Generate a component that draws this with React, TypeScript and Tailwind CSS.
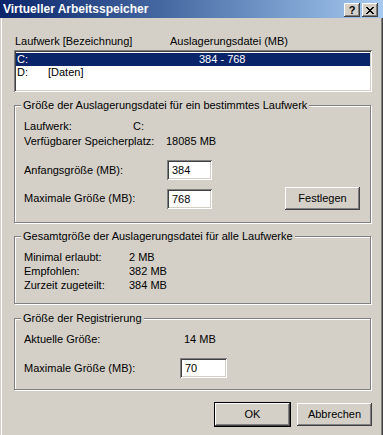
import type { ReactNode } from 'react'

const raised =
  'bg-[#d4d0c8] shadow-[inset_-1px_-1px_#404040,inset_1px_1px_#fff,inset_-2px_-2px_#808080,inset_2px_2px_#d4d0c8]'
const sunken =
  'bg-white shadow-[inset_1px_1px_#808080,inset_-1px_-1px_#fff,inset_2px_2px_#404040,inset_-2px_-2px_#d4d0c8]'

function Group({ title, className, children }: { title: string; className: string; children: ReactNode }) {
  // etched frame: gray line with a white line just below/right of it
  return (
    <div className={`relative mr-[1px] border border-[#808080] shadow-[1px_1px_0_#fff,inset_1px_1px_0_#fff] ${className}`}>
      <span className="absolute left-[6px] top-[-7px] h-[13px] bg-[#d4d0c8] px-[2px] leading-[13px]">{title}</span>
      {children}
    </div>
  )
}

function Field({ value, width }: { value: string; width: string }) {
  return (
    <div className={`${sunken} ${width} h-[20px] pl-[5px] leading-[20px]`}>{value}</div>
  )
}

function Button({ label, isDefault = false }: { label: string; isDefault?: boolean }) {
  return (
    <button
      className={`${raised} flex h-[23px] w-[75px] items-center justify-center ${isDefault ? 'outline outline-1 outline-black' : ''}`}
    >
      {label}
    </button>
  )
}

export default function App() {
  return (
    <div
      className="flex h-[435px] w-[383px] flex-col overflow-hidden bg-[#d4d0c8] text-[11px] text-black"
      style={{ fontFamily: '"Liberation Sans", Arial, sans-serif' }}
    >
      {/* title bar */}
      <div className="flex h-[18px] items-start bg-gradient-to-r from-[#0a246a] to-[#a6caf0] pl-[3px] pr-[5px]">
        <span className="mt-[2px] flex-1 text-[12px] font-bold leading-[14px] text-white">Virtueller Arbeitsspeicher</span>
        <div className="mt-[3px] flex gap-[2px]">
          <div className={`${raised} flex h-[14px] w-[16px] items-center justify-center text-[11px] font-bold leading-none`}>?</div>
          <div className={`${raised} flex h-[14px] w-[16px] items-center justify-center`}>
            <svg width="8" height="7" viewBox="0 0 8 7" shapeRendering="crispEdges">
              <path d="M0 0h2v1H0zM6 0h2v1H6zM1 1h2v1H1zM5 1h2v1H5zM2 2h4v1H2zM3 3h2v1H3zM2 4h4v1H2zM1 5h2v1H1zM5 5h2v1H5zM0 6h2v1H0zM6 6h2v1H6z" fill="#000" />
            </svg>
          </div>
        </div>
      </div>

      {/* body */}
      <div className="flex flex-1 flex-col pl-[14px] pr-[11px] shadow-[inset_1px_0_#d4d0c8,inset_2px_0_#fff,inset_-1px_0_#404040,inset_-2px_0_#808080]">
        <div className="mt-[17px] grid h-[13px] grid-cols-[155px_1fr] pl-[1px] leading-[13px]">
          <span>Laufwerk [Bezeichnung]</span>
          <span>Auslagerungsdatei (MB)</span>
        </div>

        <div className={`${sunken} mt-[2px] h-[42px] px-[2px] pt-[3px]`}>
          <div className="grid h-[13px] grid-cols-[31px_151px_1fr] bg-[#0a246a] pl-[1px] leading-[13px] text-white">
            <span>C:</span>
            <span></span>
            <span>384 - 768</span>
          </div>
          <div className="grid h-[13px] grid-cols-[31px_151px_1fr] pl-[1px] leading-[13px]">
            <span>D:</span>
            <span>[Daten]</span>
            <span></span>
          </div>
        </div>

        <Group title="Größe der Auslagerungsdatei für ein bestimmtes Laufwerk" className="mt-[13px] h-[118px] pl-[9px] pr-[10px] pt-[13px]">
          <div className="grid h-[15px] grid-cols-[109px_1fr] leading-[15px]">
            <span>Laufwerk:</span>
            <span>C:</span>
          </div>
          <div className="grid h-[15px] grid-cols-[142px_1fr] leading-[15px]">
            <span>Verfügbarer Speicherplatz:</span>
            <span>18085 MB</span>
          </div>
          <div className="mt-[11px] flex h-[20px] items-center">
            <span className="w-[143px]">Anfangsgröße (MB):</span>
            <Field value="384" width="w-[45px]" />
          </div>
          <div className="mt-[7px] flex h-[23px] items-center">
            <span className="w-[143px]">Maximale Größe (MB):</span>
            <Field value="768" width="w-[45px]" />
            <div className="flex-1" />
            <Button label="Festlegen" />
          </div>
        </Group>

        <Group title="Gesamtgröße der Auslagerungsdatei für alle Laufwerke" className="mt-[13px] h-[68px] pl-[9px] pt-[13px]">
          <div className="grid h-[14px] grid-cols-[105px_1fr] leading-[14px]">
            <span>Minimal erlaubt:</span>
            <span>2 MB</span>
          </div>
          <div className="grid h-[14px] grid-cols-[105px_1fr] leading-[14px]">
            <span>Empfohlen:</span>
            <span>382 MB</span>
          </div>
          <div className="grid h-[14px] grid-cols-[105px_1fr] leading-[14px]">
            <span>Zurzeit zugeteilt:</span>
            <span>384 MB</span>
          </div>
        </Group>

        <Group title="Größe der Registrierung" className="mt-[14px] h-[72px] pl-[9px] pt-[13px]">
          <div className="grid h-[14px] grid-cols-[160px_1fr] leading-[14px]">
            <span>Aktuelle Größe:</span>
            <span>14 MB</span>
          </div>
          <div className="mt-[12px] flex h-[20px] items-center">
            <span className="w-[156px]">Maximale Größe (MB):</span>
            <Field value="70" width="w-[47px]" />
          </div>
        </Group>

        <div className="mt-[13px] flex justify-end gap-[7px]">
          <Button label="OK" isDefault />
          <Button label="Abbrechen" />
        </div>
      </div>
    </div>
  )
}
